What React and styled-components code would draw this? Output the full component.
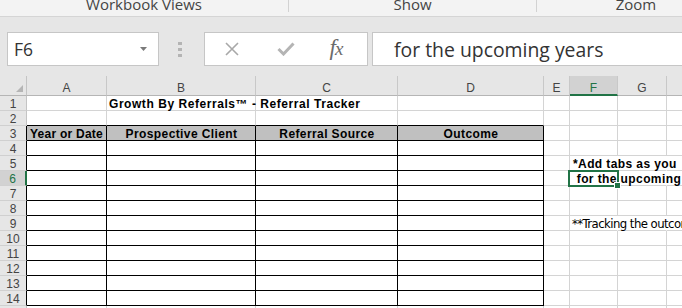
import React from 'react';
import styled, { createGlobalStyle } from 'styled-components';

const GREEN = '#217346';
const GRID = '#d4d4d4';
const BLACK = '#000';

const Global = createGlobalStyle`
  html, body { margin: 0; padding: 0; background: #fff; overflow: hidden; }
  body { width: 682px; height: 308px; font-family: "Liberation Sans", Arial, sans-serif; }
`;

const Page = styled.div`
  width: 682px;
  height: 308px;
  overflow: hidden;
  display: flex;
  flex-direction: column;
  background: #e6e6e6;
`;

const RibbonStrip = styled.div`
  flex: none;
  height: 16px;
  display: flex;
  background: #f3f3f3;
  border-bottom: 1px solid #d5d5d5;
  overflow: hidden;
`;

const RibbonGroup = styled.div`
  flex: none;
  width: ${(p) => p.$w}px;
  height: 12px;
  box-sizing: border-box;
  border-right: ${(p) => (p.$divider ? '1px solid #d2d2d2' : 'none')};
  text-align: center;
  font-family: "Open Sans", sans-serif;
  font-size: 15px;
  line-height: 15px;
  color: #444;
  white-space: nowrap;
`;

const GroupLabel = styled.div`
  margin-top: -3px;
`;

const FormulaBar = styled.div`
  flex: none;
  height: 59px;
  box-sizing: border-box;
  padding: 15px 0 10px 7px;
  display: flex;
  align-items: stretch;
`;

const NameBox = styled.div`
  flex: none;
  width: 152px;
  box-sizing: border-box;
  border: 1px solid #c6c6c6;
  background: #fff;
  display: flex;
  align-items: center;
  padding-left: 6px;
  font-family: "Open Sans", sans-serif;
  font-size: 17.5px;
  color: #333;
`;

const NameArrow = styled.svg`
  margin-left: auto;
  margin-right: 11px;
`;

const Grip = styled.div`
  flex: none;
  width: 45px;
  box-sizing: border-box;
  padding-left: 19px;
  display: flex;
  flex-direction: column;
  justify-content: center;
  gap: 3px;
`;

const GripDot = styled.span`
  display: block;
  width: 4px;
  height: 3px;
  background: #b4b4b4;
`;

const CommandBox = styled.div`
  flex: none;
  width: 164px;
  box-sizing: border-box;
  border: 1px solid #c6c6c6;
  background: #fff;
  display: grid;
  grid-template-columns: 54px 54px 1fr;
  align-items: center;
  justify-items: center;
`;

const FxLabel = styled.span`
  font-family: "Liberation Serif", "DejaVu Serif", serif;
  font-style: italic;
  font-size: 23px;
  line-height: 23px;
  color: #6b6b6b;
  margin-left: -8px;
  margin-top: -2px;
  letter-spacing: -1px;
`;

const FxSmall = styled.span`
  font-size: 19px;
`;

const FormulaInput = styled.div`
  flex: 1;
  margin-left: 4px;
  margin-right: -10px;
  box-sizing: border-box;
  border: 1px solid #c6c6c6;
  background: #fff;
  display: flex;
  align-items: center;
  padding-left: 21px;
  font-family: "Open Sans", sans-serif;
  font-size: 19.4px;
  color: #333;
  white-space: nowrap;
`;

const Sheet = styled.div`
  flex: 1;
  display: grid;
  grid-template-columns: 27px 80px 149px 142px 146px 26px 48px 49px 64px;
  grid-template-rows: 20px;
  grid-auto-rows: 15px;
  background: #fff;
`;

const Corner = styled.div`
  box-sizing: border-box;
  background: #e6e6e6;
  border-right: 1px solid #c4c4c4;
  border-bottom: 1px solid #b5b5b5;
  display: flex;
  justify-content: flex-end;
  align-items: flex-end;
  padding: 0 3px 3px 0;
`;

const ColHead = styled.div`
  box-sizing: border-box;
  background: ${(p) => (p.$sel ? '#d2d2d2' : '#e6e6e6')};
  color: ${(p) => (p.$sel ? GREEN : '#444')};
  border-right: 1px solid #c8c8c8;
  border-bottom: ${(p) => (p.$sel ? `2px solid ${GREEN}` : '1px solid #b5b5b5')};
  text-align: center;
  font-size: 12px;
  line-height: 14px;
  padding-top: 5px;
`;

const RowHead = styled.div`
  box-sizing: border-box;
  background: ${(p) => (p.$sel ? '#d2d2d2' : '#e6e6e6')};
  color: ${(p) => (p.$sel ? GREEN : '#444')};
  border-right: ${(p) => (p.$sel ? `2px solid ${GREEN}` : `1px solid ${p.$edge}`)};
  border-bottom: 1px solid #d0d0d0;
  text-align: center;
  font-size: 12px;
  line-height: 14px;
  padding-top: 1px;
`;

const Cell = styled.div`
  position: relative;
  box-sizing: border-box;
  min-width: 0;
  background: ${(p) => p.$bg || 'transparent'};
  border-right: 1px solid ${(p) => p.$r};
  border-bottom: 1px solid ${(p) => p.$b};
  text-align: ${(p) => p.$align || 'left'};
  padding: 1px 2px 0 ${(p) => p.$pl ?? 3}px;
  font-family: "Liberation Sans", Arial, sans-serif;
  font-size: 12px;
  line-height: 14px;
  letter-spacing: ${(p) => p.$ls ?? 0.4}px;
  font-weight: ${(p) => (p.$bold ? 700 : 400)};
  white-space: pre;
  color: #000;
`;

const CellText = styled.span`
  position: relative;
  z-index: 1;
  font-family: ${(p) =>
    p.$narrow
      ? '"Liberation Sans Narrow", "Arial Narrow", "DejaVu Sans Condensed", sans-serif'
      : 'inherit'};
  font-size: ${(p) => (p.$narrow ? '13px' : 'inherit')};
`;

const Selection = styled.div`
  position: absolute;
  left: -2px;
  right: -2px;
  top: -1px;
  bottom: -2px;
  border: 2px solid ${GREEN};
  z-index: 3;
  pointer-events: none;
`;

const FillHandle = styled.div`
  position: absolute;
  right: -4px;
  bottom: -4px;
  width: 7px;
  height: 7px;
  box-sizing: border-box;
  background: ${GREEN};
  border: 1px solid #fff;
  z-index: 4;
`;

const COLS = ['A', 'B', 'C', 'D', 'E', 'F', 'G', 'H'];
const TABLE = ['A', 'B', 'C', 'D'];
const ROWS = Array.from({ length: 15 }, (_, i) => i + 1);

const CONTENT = {
  '1B': { text: 'Growth By Referrals™ - Referral Tracker', bold: true, pl: 2, ls: 0.55 },
  '3A': { text: 'Year or Date', bold: true, ls: 0.25 },
  '3B': { text: 'Prospective Client', bold: true, align: 'center' },
  '3C': { text: 'Referral Source', bold: true, align: 'center' },
  '3D': { text: 'Outcome', bold: true, align: 'center' },
  '5F': { text: '*Add tabs as you', bold: true },
  '6F': { text: ' for the upcoming years', bold: true },
  '9F': { text: '**Tracking the outcome of your referrals', narrow: true, pl: 2, ls: -0.55 },
};

const OVERFLOW_ROWS = [5, 6, 9];

function XIcon() {
  return (
    <svg width="14" height="14" viewBox="0 0 14 14">
      <path d="M1 1 L13 13 M13 1 L1 13" stroke="#a8a8a8" strokeWidth="1.6" fill="none" />
    </svg>
  );
}

function CheckIcon() {
  return (
    <svg width="18" height="14" viewBox="0 0 18 14">
      <path d="M1.5 7 L6.5 12 L16.5 1.5" stroke="#b4b4b4" strokeWidth="3" fill="none" />
    </svg>
  );
}

function cellProps(r, c) {
  const inTable = r >= 3 && r <= 14 && TABLE.includes(c);
  const overflow = OVERFLOW_ROWS.includes(r) && (c === 'F' || c === 'G' || c === 'H');
  let right = inTable ? BLACK : GRID;
  if (overflow) right = 'transparent';
  const bottom = inTable || (r === 2 && TABLE.includes(c)) ? BLACK : GRID;
  const bg = r === 3 && TABLE.includes(c) ? '#c0c0c0' : undefined;
  return { right, bottom, bg };
}

export default function App() {
  return (
    <>
      <Global />
      <Page>
        <RibbonStrip>
          <RibbonGroup $w={289} $divider>
            <GroupLabel>Workbook Views</GroupLabel>
          </RibbonGroup>
          <RibbonGroup $w={248} $divider>
            <GroupLabel>Show</GroupLabel>
          </RibbonGroup>
          <RibbonGroup $w={198}>
            <GroupLabel>Zoom</GroupLabel>
          </RibbonGroup>
        </RibbonStrip>

        <FormulaBar>
          <NameBox>
            F6
            <NameArrow width="7" height="4" viewBox="0 0 7 4">
              <polygon points="0,0 7,0 3.5,4" fill="#7a7a7a" />
            </NameArrow>
          </NameBox>
          <Grip>
            <GripDot />
            <GripDot />
            <GripDot />
          </Grip>
          <CommandBox>
            <XIcon />
            <CheckIcon />
            <FxLabel>
              f<FxSmall>x</FxSmall>
            </FxLabel>
          </CommandBox>
          <FormulaInput>for the upcoming years</FormulaInput>
        </FormulaBar>

        <Sheet>
          <Corner>
            <svg width="7" height="7" viewBox="0 0 7 7">
              <polygon points="7,0 7,7 0,7" fill="#b5b5b5" />
            </svg>
          </Corner>
          {COLS.map((c) => (
            <ColHead key={c} $sel={c === 'F'}>
              {c}
            </ColHead>
          ))}
          {ROWS.map((r) => (
            <React.Fragment key={r}>
              <RowHead $sel={r === 6} $edge={r >= 3 && r <= 14 ? BLACK : '#c4c4c4'}>
                {r}
              </RowHead>
              {COLS.map((c) => {
                const key = `${r}${c}`;
                const content = CONTENT[key];
                const { right, bottom, bg } = cellProps(r, c);
                return (
                  <Cell
                    key={key}
                    $r={right}
                    $b={bottom}
                    $bg={bg}
                    $bold={content?.bold}
                    $align={content?.align}
                    $pl={content?.pl}
                    $ls={content?.ls}
                  >
                    {content && <CellText $narrow={content.narrow}>{content.text}</CellText>}
                    {key === '6F' && (
                      <>
                        <Selection />
                        <FillHandle />
                      </>
                    )}
                  </Cell>
                );
              })}
            </React.Fragment>
          ))}
        </Sheet>
      </Page>
    </>
  );
}
